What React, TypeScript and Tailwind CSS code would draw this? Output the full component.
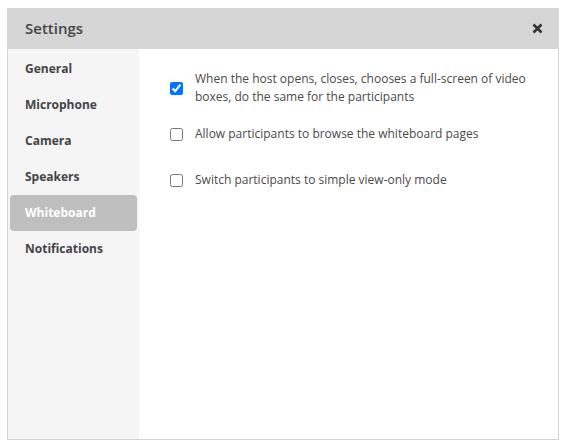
import { useState } from "react";

const TABS = ["General", "Microphone", "Camera", "Speakers", "Whiteboard", "Notifications"];

const OPTIONS = [
  { id: "sync", label: "When the host opens, closes, chooses a full-screen of video boxes, do the same for the participants", checked: true, mt: "mt-[21px]" },
  { id: "browse", label: "Allow participants to browse the whiteboard pages", checked: false, mt: "mt-[19px]" },
  { id: "viewonly", label: "Switch participants to simple view-only mode", checked: false, mt: "mt-[28px]" },
];

export default function App() {
  const [active, setActive] = useState("Whiteboard");
  const [values, setValues] = useState<Record<string, boolean>>(
    Object.fromEntries(OPTIONS.map((o) => [o.id, o.checked]))
  );

  return (
    <div className="h-[446px] w-[563px] bg-white pl-[7px] pt-[8px] font-['Open_Sans',sans-serif] text-[#444]">
      <div className="flex h-[432px] w-[552px] flex-col border border-[#d3d3d3]">
        <div className="-mx-px -mt-px flex h-[41px] shrink-0 items-center justify-between bg-[#d6d6d6] pl-[18px] pr-[14px]">
          <span className="text-[15px] font-semibold text-[#444]">Settings</span>
          <button className="flex h-4 w-4 items-center justify-center text-[#333]" title="Close">
            <svg width="11" height="11" viewBox="0 0 11 11">
              <path d="M1.5 1.5 L9.5 9.5 M9.5 1.5 L1.5 9.5" stroke="currentColor" strokeWidth="2.6" />
            </svg>
          </button>
        </div>
        <div className="flex flex-1">
          <div className="w-[131px] bg-[#f5f5f5] px-[2px] pt-[2px]">
            {TABS.map((t) => (
              <button
                key={t}
                onClick={() => setActive(t)}
                className={`flex h-[36px] w-full items-center rounded-[4px] pl-[15px] text-left text-[12px] font-bold ${
                  active === t ? "bg-[#bfbfbf] text-white" : "text-[#444]"
                }`}
              >
                {t}
              </button>
            ))}
          </div>
          <div className="flex-1 pl-[31px]">
            {OPTIONS.map((o) => (
              <label key={o.id} className={`flex items-center ${o.mt} cursor-pointer`}>
                <input
                  type="checkbox"
                  checked={values[o.id]}
                  onChange={(e) => setValues((v) => ({ ...v, [o.id]: e.target.checked }))}
                  className="m-0 h-[13px] w-[13px] shrink-0"
                />
                <span className="ml-[12px] w-[345px] text-[12px] leading-[18px] text-[#4a4a4a]">{o.label}</span>
              </label>
            ))}
          </div>
        </div>
      </div>
    </div>
  );
}
